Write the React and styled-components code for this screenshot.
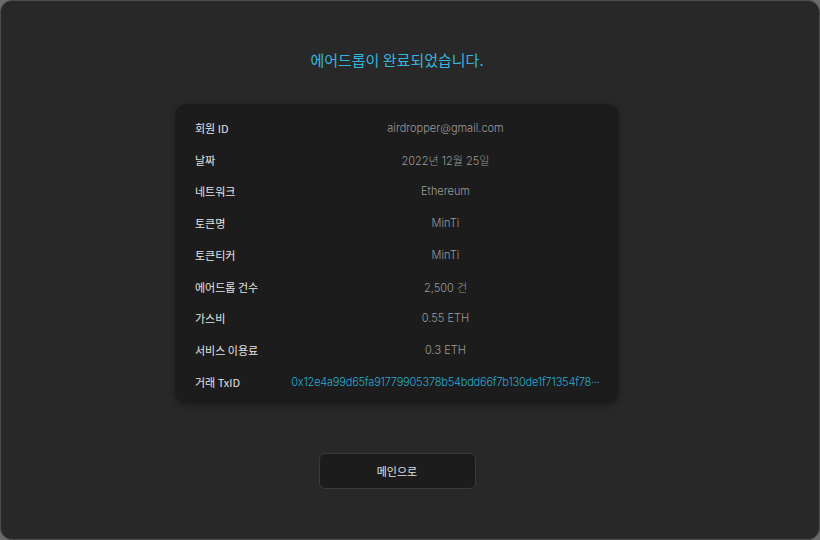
import styled, { createGlobalStyle } from "styled-components";

const GlobalStyle = createGlobalStyle`
    html, body {
        margin: 0;
        padding: 0;
        background: #6b6b6b;
    }
    * {
        box-sizing: border-box;
    }
`;

const rows = [
    { label: "회원 ID", value: "airdropper@gmail.com" },
    { label: "날짜", value: "2022년 12월 25일" },
    { label: "네트워크", value: "Ethereum" },
    { label: "토큰명", value: "MinTi" },
    { label: "토큰티커", value: "MinTi" },
    { label: "에어드롭 건수", value: "2,500 건" },
    { label: "가스비", value: "0.55 ETH" },
    { label: "서비스 이용료", value: "0.3 ETH" },
    {
        label: "거래 TxID",
        value: "0x12e4a99d65fa91779905378b54bdd66f7b130de1f71354f78···",
        link: true,
    },
];

const App = () => {
    return (
        <>
            <GlobalStyle />
            <StyledPanel>
                <StyledTitle>에어드롭이 완료되었습니다.</StyledTitle>
                <StyledCard>
                    {rows.map((row) => (
                        <StyledRow key={row.label}>
                            <StyledLabel>{row.label}</StyledLabel>
                            <StyledValue $link={row.link}>{row.value}</StyledValue>
                        </StyledRow>
                    ))}
                </StyledCard>
                <StyledButton>메인으로</StyledButton>
            </StyledPanel>
        </>
    );
};

const StyledPanel = styled.div`
    width: 820px;
    height: 540px;
    padding-right: 26px;
    background: #282828;
    border: 1px solid #4c4c4c;
    border-radius: 12px;
    display: flex;
    flex-direction: column;
    align-items: center;
    font-family: Inter, "Noto Sans CJK KR", sans-serif;
`;

const StyledTitle = styled.h1`
    margin: 48px 0 0;
    height: 22px;
    line-height: 22px;
    font-size: 15px;
    font-weight: 400;
    color: #35b6dd;
    font-family: "Noto Sans CJK KR", sans-serif;
`;

const StyledCard = styled.div`
    margin-top: 33px;
    width: 444px;
    height: 300px;
    padding: 8px 19px 6px 20px;
    background: #1c1c1c;
    border-radius: 12px;
    box-shadow: 0 2px 6px rgba(0, 0, 0, 0.25);
    display: flex;
    flex-direction: column;
`;

const StyledRow = styled.div`
    display: grid;
    grid-template-columns: 96px 1fr;
    align-items: center;
    height: 31.75px;
    font-size: 11px;
`;

const StyledLabel = styled.span`
    color: #e4e4e4;
    font-weight: 400;
    font-family: "Noto Sans CJK KR", sans-serif;
`;

const StyledValue = styled.span`
    color: ${(props) => (props.$link ? "#2aa9cf" : "#9b9b9b")};
    text-align: center;
    white-space: nowrap;
    font-weight: 300;
    letter-spacing: ${(props) => (props.$link ? "-0.2px" : "0")};
`;

const StyledButton = styled.button`
    margin-top: 49px;
    width: 157px;
    height: 36px;
    background: #1c1c1c;
    border: 1px solid #3a3a3a;
    border-radius: 6px;
    color: #e0e0e0;
    font-size: 11px;
    font-weight: 400;
    font-family: "Noto Sans CJK KR", sans-serif;
    cursor: pointer;
`;

export default App;
